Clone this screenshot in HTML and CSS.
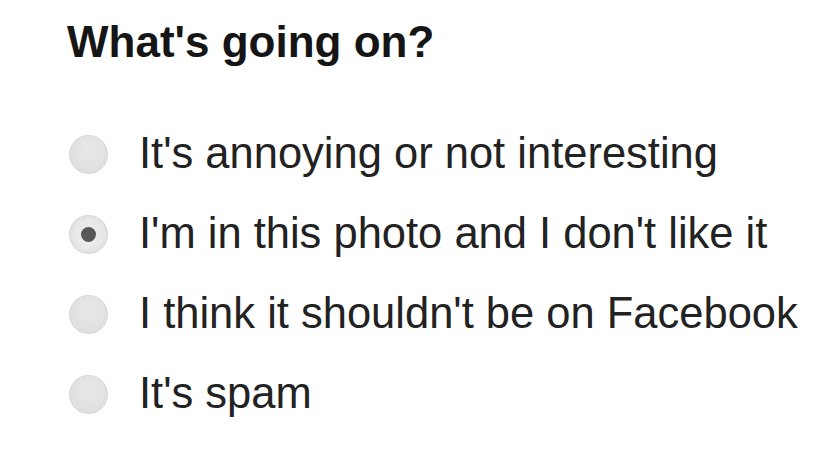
FILE: index.html
```html
<!DOCTYPE html>
<html>
<head>
<meta charset="utf-8">
<link rel="stylesheet" href="styles.css">
</head>
<body>
<div class="dialog">
  <h1 class="title">What's going on?</h1>
  <ul class="options">
    <li class="option"><span class="radio"></span><span class="label">It's annoying or not interesting</span></li>
    <li class="option"><span class="radio checked"></span><span class="label">I'm in this photo and I don't like it</span></li>
    <li class="option"><span class="radio"></span><span class="label">I think it shouldn't be on Facebook</span></li>
    <li class="option"><span class="radio"></span><span class="label">It's spam</span></li>
  </ul>
</div>
</body>
</html>
```
FILE: styles.css
```css
html, body {
  margin: 0;
  padding: 0;
  background: #ffffff;
}
body {
  width: 835px;
  height: 452px;
  overflow: hidden;
  font-family: "Liberation Sans", Arial, sans-serif;
}
.dialog {
  padding: 20px 0 0 67px;
}
.title {
  margin: 0;
  font-size: 44px;
  line-height: 44px;
  font-weight: bold;
  color: #151515;
}
.options {
  list-style: none;
  margin: 50px 0 0 2px;
  padding: 0;
  display: flex;
  flex-direction: column;
}
.option {
  height: 80px;
  display: flex;
  align-items: center;
  gap: 31px;
}
.radio {
  width: 39px;
  height: 39px;
  border-radius: 50%;
  box-sizing: border-box;
  border: 1px solid #d6d6d6;
  background: radial-gradient(circle at 50% 40%, #e8e8e8 0%, #e0e0e0 70%, #d8d8d8 100%);
  flex: none;
  display: flex;
  align-items: center;
  justify-content: center;
}
.radio.checked {
  background: radial-gradient(circle, #efefef 0%, #e8e8e8 55%, #d4d4d4 100%);
}
.radio.checked::after {
  content: "";
  width: 15px;
  height: 15px;
  border-radius: 50%;
  background: #585858;
}
.label {
  font-size: 43.5px;
  line-height: 44px;
  color: #222222;
  margin-top: -3px;
}
```
